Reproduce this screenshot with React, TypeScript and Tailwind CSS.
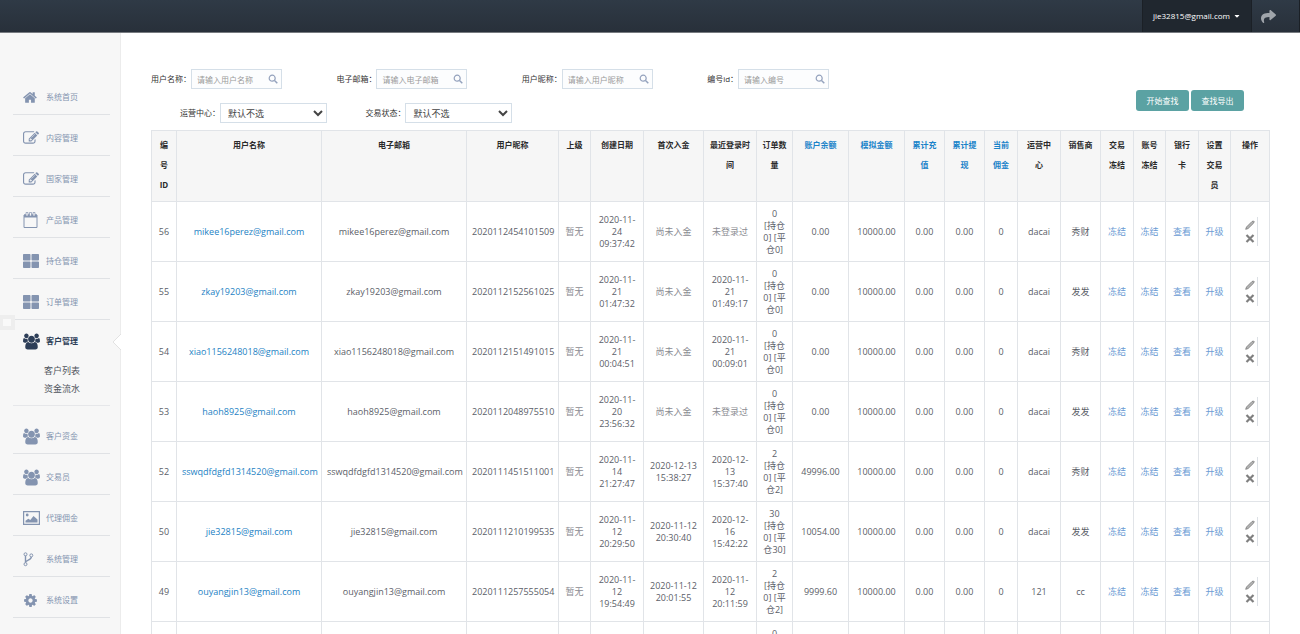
import { useState } from "react";
import type { ReactNode } from "react";
import { FaCaretDown, FaShare, FaThLarge } from "react-icons/fa";

const HOME =
  "M1408 992v480q0 26-19 45t-45 19h-384v-384h-256v384h-384q-26 0-45-19t-19-45v-480q0-1 .5-3t.5-3l575-474 575 474q1 2 1 6zm223-69l-62 74q-8 9-21 11h-3q-13 0-21-7l-692-577-692 577q-12 8-24 7-13-2-21-11l-62-74q-8-10-7-23.5t11-21.5l719-599q32-26 76-26t76 26l244 204v-195q0-14 9-23t23-9h192q14 0 23 9t9 23v408l219 182q10 8 11 21.5t-7 23.5z";
const EDIT =
  "M888 1184l116-116-152-152-116 116v56h96v96h56zm440-720q-16-16-33 1l-350 350q-17 17-1 33t33-1l350-350q17-17 1-33zm80 594v190q0 119-84.5 203.5t-203.5 84.5h-832q-119 0-203.5-84.5t-84.5-203.5v-832q0-119 84.5-203.5t203.5-84.5h832q63 0 117 25 15 7 18 23 3 17-9 29l-49 49q-14 14-32 8-23-6-45-6h-832q-66 0-113 47t-47 113v832q0 66 47 113t113 47h832q66 0 113-47t47-113v-126q0-13 9-22l64-64q15-15 35-7t20 29zm-96-738l288 288-672 672h-288v-288zm444 132l-92 92-288-288 92-92q28-28 68-28t68 28l152 152q28 28 28 68t-28 68z";
const GROUP =
  "M529 896q-162 5-265 128h-134q-82 0-138-40.5t-56-118.5q0-353 124-353 6 0 43.5 21t97.5 42.5 119 21.5q67 0 133-23-5 37-5 66 0 139 81 256zm1071 637q0 120-73 189.5t-194 69.5h-874q-121 0-194-69.5t-73-189.5q0-53 3.5-103.5t14-109 26.5-108.5 43-97.5 62-81 85.5-53.5 111.5-20q10 0 43 21.5t73 48 107 48 135 21.5 135-21.5 107-48 73-48 43-21.5q61 0 111.5 20t85.5 53.5 62 81 43 97.5 26.5 108.5 14 109 3.5 103.5zm-1024-1277q0 106-75 181t-181 75-181-75-75-181 75-181 181-75 181 75 75 181zm704 384q0 159-112.5 271.5t-271.5 112.5-271.5-112.5-112.5-271.5 112.5-271.5 271.5-112.5 271.5 112.5 112.5 271.5zm576 225q0 78-56 118.5t-138 40.5h-134q-103-123-265-128 81-117 81-256 0-29-5-66 66 23 133 23 59 0 119-21.5t97.5-42.5 43.5-21q124 0 124 353zm-128-609q0 106-75 181t-181 75-181-75-75-181 75-181 181-75 181 75 75 181z";
const COG =
  "M1152 896q0-106-75-181t-181-75-181 75-75 181 75 181 181 75 181-75 75-181zm512-109v222q0 12-8 23t-20 13l-185 28q-19 54-39 91 35 50 107 138 10 12 10 25t-9 23q-27 37-99 108t-94 71q-12 0-26-9l-138-108q-44 23-91 38-16 136-29 186-7 28-36 28h-222q-14 0-24.5-8.5t-11.5-21.5l-28-184q-49-16-90-37l-141 107q-10 9-25 9-14 0-25-11-126-114-165-168-7-10-7-23 0-12 8-23 15-21 51-66.5t54-70.5q-27-50-41-99l-183-27q-13-2-21-12.5t-8-23.5v-222q0-12 8-23t19-13l186-28q14-46 39-92-40-57-107-138-10-12-10-24 0-10 9-23 26-36 98.5-107.5t94.5-71.5q13 0 26 10l138 107q44-23 91-38 16-136 29-186 7-28 36-28h222q14 0 24.5 8.5t11.5 21.5l28 184q49 16 90 37l142-107q9-9 24-9 13 0 25 10 129 119 165 170 7 8 7 22 0 12-8 23-15 21-51 66.5t-54 70.5q26 50 41 98l183 28q13 2 21 12.5t8 23.5z";

function Glyph({ d, className, viewBox = "0 0 1792 1792" }: { d: string; className: string; viewBox?: string }) {
  return (
    <svg viewBox={viewBox} className={className} fill="currentColor" aria-hidden="true">
      <path d={d} />
    </svg>
  );
}

const homeIcon = <Glyph d={HOME} className="h-[15px] w-[15px]" />;
const editIcon = <Glyph d={EDIT} className="h-4 w-4" />;
const groupIcon = <Glyph d={GROUP} className="h-[17px] w-[17px]" viewBox="-64 0 1920 1792" />;
const cogIcon = <Glyph d={COG} className="h-[15px] w-[15px]" />;
const gridIcon = <FaThLarge className="h-4 w-4" />;

const calendarIcon = (
  <svg viewBox="0 0 16 16" className="h-4 w-4" aria-hidden="true">
    <path d="M1 3h13v12.5H1z" fill="none" stroke="currentColor" strokeWidth="1" />
    <path d="M1 2.5h13v3H1z" fill="currentColor" />
    <path d="M3 .5h2V4H3zM6.5.5h2V4h-2zM10 .5h2V4h-2z" fill="#f7f7f7" stroke="currentColor" strokeWidth=".7" />
  </svg>
);

const pictureIcon = (
  <svg viewBox="0 0 17 14" className="h-[14px] w-[17px]" fill="currentColor" aria-hidden="true">
    <path d="M.6.6h15.8v12.8H.6z" fill="none" stroke="currentColor" strokeWidth="1.2" />
    <circle cx="4.2" cy="4" r="1.4" />
    <path d="M2.5 11.5V9.8l2.8-2 2 1.3L10.5 5l4 3.6v2.9z" />
  </svg>
);

const forkIcon = (
  <svg viewBox="0 0 11 15" className="h-[15px] w-[11px]" fill="none" stroke="currentColor" aria-hidden="true">
    <circle cx="2.5" cy="2.3" r="1.5" />
    <circle cx="8.3" cy="3.4" r="1.5" />
    <circle cx="2.5" cy="12.2" r="1.5" />
    <path d="M2.5 3.8v6.9M8.3 5c0 3.6-5.8 2.6-5.8 5.6" strokeWidth="1.4" />
  </svg>
);

const menuTop = [
  { label: "系统首页", icon: homeIcon },
  { label: "内容管理", icon: editIcon },
  { label: "国家管理", icon: editIcon },
  { label: "产品管理", icon: calendarIcon },
  { label: "持仓管理", icon: gridIcon },
  { label: "订单管理", icon: gridIcon },
];

const menuBottom = [
  { label: "客户资金", icon: groupIcon },
  { label: "交易员", icon: groupIcon },
  { label: "代理佣金", icon: pictureIcon },
  { label: "系统管理", icon: forkIcon },
  { label: "系统设置", icon: cogIcon },
  { label: "系统日志", icon: cogIcon },
];

const columns = [
  { title: "编\n号\nID", col: "w-[25px]" },
  { title: "用户名称", col: "w-[145px]" },
  { title: "电子邮箱", col: "w-[145px]" },
  { title: "用户昵称", col: "w-[92px]" },
  { title: "上级", col: "w-[32px]" },
  { title: "创建日期", col: "w-[53px]" },
  { title: "首次入金", col: "w-[60px]" },
  { title: "最近登录时\n间", col: "w-[53px]" },
  { title: "订单数\n量", col: "w-[36px]" },
  { title: "账户余额", col: "w-[56px]", sortable: true },
  { title: "模拟金额", col: "w-[56px]", sortable: true },
  { title: "累计充\n值", col: "w-[40px]", sortable: true },
  { title: "累计提\n现", col: "w-[40px]", sortable: true },
  { title: "当前\n佣金", col: "w-[33px]", sortable: true },
  { title: "运营中\n心", col: "w-[43px]" },
  { title: "销售商", col: "w-[40px]" },
  { title: "交易\n冻结", col: "w-[33px]" },
  { title: "账号\n冻结", col: "w-[32px]" },
  { title: "银行\n卡", col: "w-[33px]" },
  { title: "设置\n交易\n员", col: "w-[32px]" },
  { title: "操作", col: "w-[39px]" },
];

const customers = [
  { id: 56, email: "mikee16perez@gmail.com", nick: "2020112454101509", created: "2020-11-24 09:37:42", first: "", login: "", orders: 0, balance: "0.00", center: "dacai", seller: "秀财" },
  { id: 55, email: "zkay19203@gmail.com", nick: "2020112152561025", created: "2020-11-21 01:47:32", first: "", login: "2020-11-21 01:49:17", orders: 0, balance: "0.00", center: "dacai", seller: "发发" },
  { id: 54, email: "xiao1156248018@gmail.com", nick: "2020112151491015", created: "2020-11-21 00:04:51", first: "", login: "2020-11-21 00:09:01", orders: 0, balance: "0.00", center: "dacai", seller: "秀财" },
  { id: 53, email: "haoh8925@gmail.com", nick: "2020112048975510", created: "2020-11-20 23:56:32", first: "", login: "", orders: 0, balance: "0.00", center: "dacai", seller: "发发" },
  { id: 52, email: "sswqdfdgfd1314520@gmail.com", nick: "2020111451511001", created: "2020-11-14 21:27:47", first: "2020-12-13 15:38:27", login: "2020-12-13 15:37:40", orders: 2, balance: "49996.00", center: "dacai", seller: "秀财" },
  { id: 50, email: "jie32815@gmail.com", nick: "2020111210199535", created: "2020-11-12 20:29:50", first: "2020-11-12 20:30:40", login: "2020-12-16 15:42:22", orders: 30, balance: "10054.00", center: "dacai", seller: "发发" },
  { id: 49, email: "ouyangjin13@gmail.com", nick: "2020111257555054", created: "2020-11-12 19:54:49", first: "2020-11-12 20:01:55", login: "2020-11-12 20:11:59", orders: 2, balance: "9999.60", center: "121", seller: "cc" },
  { id: 48, email: "lin20201@gmail.com", nick: "2020111254485051", created: "2020-11-12 18:21:10", first: "", login: "", orders: 0, balance: "0.00", center: "121", seller: "cc" },
];

function MenuItem({ label, icon }: { label: string; icon: ReactNode }) {
  return (
    <li className="h-[41px] border-b border-[#e0e2e5]">
      <a href="#" className="flex h-full items-center gap-[7px] pl-[10px] pt-1.5 text-[#8494b0]">
        <span className="w-4 shrink-0">{icon}</span>
        {label}
      </a>
    </li>
  );
}

function Sidebar() {
  return (
    <aside className="relative w-[121px] shrink-0 border-r border-[#ececec] bg-[#f7f7f7] pl-[13px] pr-[10px] pt-[41px] text-[8px]">
      <nav>
        <ul>
          {menuTop.map((item) => (
            <MenuItem key={item.label} {...item} />
          ))}

          <li className="mb-[7px] border-b border-[#e6e7ea] pb-[7px]">
            <a href="#" className="flex h-10 items-center gap-[7px] pl-[10px] pt-[2px] font-bold text-[#2d3e58]">
              <span className="w-4 shrink-0">{groupIcon}</span>
              客户管理
            </a>
            <ul className="pl-[31px] pt-[2px] text-[9px] leading-[18px] text-[#4f545c]">
              <li><a href="#">客户列表</a></li>
              <li><a href="#">资金流水</a></li>
            </ul>
          </li>

          {menuBottom.map((item) => (
            <MenuItem key={item.label} {...item} />
          ))}
        </ul>
      </nav>

      {/* collapse handle */}
      <button aria-label="收起" className="absolute left-0 top-[282px] h-[15px] w-[15px] border-4 border-l-[3px] border-[#eeeeee] bg-[#f9f9f9]" />

      {/* pointer of the open menu */}
      <svg viewBox="0 0 9 16" className="absolute -right-px top-[301px] h-4 w-[9px]" aria-hidden="true">
        <path d="M9 0 1 8l8 8z" fill="#fff" />
        <path d="M9 0 1 8l8 8" fill="none" stroke="#dcdcdc" strokeWidth=".8" />
      </svg>
    </aside>
  );
}

function SearchField({ id, label, placeholder }: { id: string; label: string; placeholder: string }) {
  const [value, setValue] = useState("");

  return (
    <div className="flex items-center">
      <label htmlFor={id} className="shrink-0">{label}</label>
      <div className="relative w-[91px]">
        <input
          id={id}
          type="text"
          value={value}
          onChange={(e) => setValue(e.target.value)}
          placeholder={placeholder}
          className="block h-5 w-full border border-[#d5dfe8] bg-[#fcfdfe] pl-[5px] pr-4 text-[8px] text-gray-600 outline-none placeholder:text-[#9a9a9a]"
        />
        <svg viewBox="0 0 10 10" className="absolute right-1 top-[5px] h-[10px] w-[10px] text-[#94a2bd]" fill="none" stroke="currentColor" aria-hidden="true">
          <circle cx="4.2" cy="4.2" r="3" strokeWidth="1.2" />
          <path d="M6.5 6.5 9.3 9.3" strokeWidth="1.5" />
        </svg>
      </div>
    </div>
  );
}

function SelectField({ id, label }: { id: string; label: string }) {
  return (
    <div className="flex items-center pl-[29px]">
      <label htmlFor={id} className="shrink-0">{label}</label>
      <select id={id} className="h-5 w-[107px] border border-[#d5dfe8] bg-white pl-[3px] text-[9px] text-[#444]">
        <option>默认不选</option>
      </select>
    </div>
  );
}

function Filters() {
  return (
    <form
      onSubmit={(e) => e.preventDefault()}
      className="grid grid-cols-[repeat(5,minmax(0,1fr))_192px] gap-y-[14px] pb-[7px] text-[8px] text-[#333]"
    >
      <SearchField id="name" label="用户名称：" placeholder="请输入用户名称" />
      <SearchField id="email" label="电子邮箱：" placeholder="请输入电子邮箱" />
      <SearchField id="nick" label="用户昵称：" placeholder="请输入用户昵称" />
      <SearchField id="code" label="编号id：" placeholder="请输入编号" />
      <div className="col-start-6 row-span-2 flex items-end justify-end gap-[2px] pb-3 pr-[26px]">
        <button type="submit" className="h-[21px] w-[53px] rounded-[3px] bg-[#5ba2a3] text-white">开始查找</button>
        <button type="button" className="h-[21px] w-[53px] rounded-[3px] bg-[#5ba2a3] text-white">查找导出</button>
      </div>
      <div className="col-start-1 row-start-2">
        <SelectField id="center" label="运营中心：" />
      </div>
      <div className="col-start-2 row-start-2">
        <SelectField id="state" label="交易状态：" />
      </div>
    </form>
  );
}

function CustomerTable() {
  const cell = "border border-[#e1e4e8] px-[5px] py-[5px]";
  const link = "text-[#6b9bd4]";
  const muted = "text-[#8b8c92]";

  return (
    <table className="w-full table-fixed border-collapse text-center text-[9px] leading-3 text-[#5b6068]">
      <colgroup>
        {columns.map((c) => (
          <col key={c.title} className={c.col} />
        ))}
      </colgroup>
      <thead className="bg-[#f6f6f6] text-[8px] leading-5 text-[#2a2a2a]">
        <tr className="h-[71px]">
          {columns.map((c) => (
            <th key={c.title} className="whitespace-pre border border-[#e1e4e8] pt-1 align-top font-bold">
              {c.sortable ? <a href="#" className="text-[#1a83c9]">{c.title}</a> : c.title}
            </th>
          ))}
        </tr>
      </thead>
      <tbody>
        {customers.map((c) => (
          <tr key={c.id} className="h-[60px]">
            <td className={cell}>{c.id}</td>
            <td className={cell}><a href="#" className="whitespace-nowrap text-[#1d82c4]">{c.email}</a></td>
            <td className={`${cell} whitespace-nowrap`}>{c.email}</td>
            <td className={`${cell} whitespace-nowrap`}>{c.nick}</td>
            <td className={`${cell} ${muted}`}>暂无</td>
            <td className={cell}>{c.created}</td>
            <td className={cell}>{c.first || <span className={muted}>尚未入金</span>}</td>
            <td className={cell}>{c.login || <span className={muted}>未登录过</span>}</td>
            <td className={cell}>
              {c.orders}<br />[持仓0] [平仓{c.orders}]
            </td>
            <td className={cell}>{c.balance}</td>
            <td className={cell}>10000.00</td>
            <td className={cell}>0.00</td>
            <td className={cell}>0.00</td>
            <td className={cell}>0</td>
            <td className={cell}>{c.center}</td>
            <td className={cell}>{c.seller}</td>
            <td className={cell}><a href="#" className={link}>冻结</a></td>
            <td className={cell}><a href="#" className={link}>冻结</a></td>
            <td className={cell}><a href="#" className={link}>查看</a></td>
            <td className={cell}><a href="#" className={link}>升级</a></td>
            <td className={cell}>
              <div className="mx-auto flex h-[29px] w-4 flex-col items-center justify-center gap-1 border-r border-[#dde1e6]">
                <button aria-label="编辑">
                  <svg viewBox="0 0 10 10" className="h-[10px] w-[10px]" aria-hidden="true">
                    <path d="M.7 9.3 1.5 7 7 1.5 8.5 1l.7.7L8.5 3.2 3 8.6z" fill="#b5b5b5" stroke="#777" strokeWidth=".8" />
                  </svg>
                </button>
                <button aria-label="删除">
                  <svg viewBox="0 0 10 9" className="h-[9px] w-[10px]" aria-hidden="true">
                    <path d="m1.5 1 7 7m0-7-7 7" stroke="#808080" strokeWidth="2.2" />
                  </svg>
                </button>
              </div>
            </td>
          </tr>
        ))}
      </tbody>
    </table>
  );
}

export default function App() {
  return (
    <div className="flex h-screen flex-col overflow-hidden bg-white font-['Open_Sans','Noto_Sans_CJK_SC',sans-serif]">
      {/* top bar */}
      <header className="flex h-[33px] shrink-0 justify-end border-b border-[#777b80] bg-linear-to-b from-[#2f3a46] to-[#28303a]">
        <button className="flex w-[110px] items-center justify-center gap-[3px] border-x border-[#1b2026] bg-[#20272f] text-[8px] text-white">
          jie32815@gmail.com
          <FaCaretDown className="h-2 w-2" />
        </button>
        <a href="#" aria-label="退出" className="flex w-[48px] items-center border-r border-[#1b2026] pl-[9px] text-[#a0a5ab]">
          <FaShare className="h-[15px] w-[15px]" />
        </a>
      </header>

      <div className="flex min-h-0 flex-1">
        <Sidebar />
        <main className="min-w-0 flex-1 overflow-hidden pl-[30px] pr-[30px] pt-9">
          <Filters />
          <CustomerTable />
        </main>
      </div>
    </div>
  );
}
